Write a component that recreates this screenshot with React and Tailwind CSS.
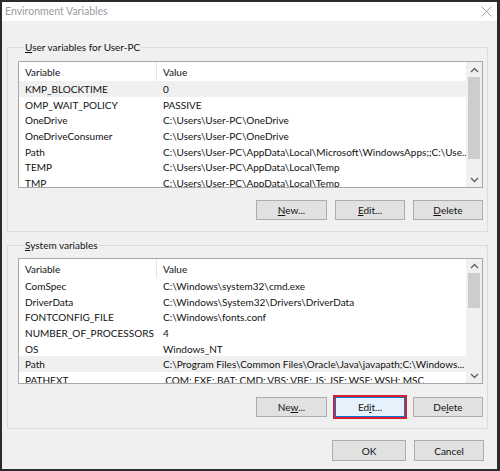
import React from "react";

const userVars = [
  ["KMP_BLOCKTIME", "0"],
  ["OMP_WAIT_POLICY", "PASSIVE"],
  ["OneDrive", "C:\\Users\\User-PC\\OneDrive"],
  ["OneDriveConsumer", "C:\\Users\\User-PC\\OneDrive"],
  ["Path", "C:\\Users\\User-PC\\AppData\\Local\\Microsoft\\WindowsApps;;C:\\Use..."],
  ["TEMP", "C:\\Users\\User-PC\\AppData\\Local\\Temp"],
  ["TMP", "C:\\Users\\User-PC\\AppData\\Local\\Temp"],
];

const systemVars = [
  ["ComSpec", "C:\\Windows\\system32\\cmd.exe"],
  ["DriverData", "C:\\Windows\\System32\\Drivers\\DriverData"],
  ["FONTCONFIG_FILE", "C:\\Windows\\fonts.conf"],
  ["NUMBER_OF_PROCESSORS", "4"],
  ["OS", "Windows_NT"],
  ["Path", "C:\\Program Files\\Common Files\\Oracle\\Java\\javapath;C:\\Windows..."],
  ["PATHEXT", ".COM;.EXE;.BAT;.CMD;.VBS;.VBE;.JS;.JSE;.WSF;.WSH;.MSC"],
];

function Chevron({ up }) {
  return (
    <svg width="9" height="6" viewBox="0 0 9 6" className="block">
      <path
        d={up ? "M1 5 L4.5 1.5 L8 5" : "M1 1 L4.5 4.5 L8 1"}
        fill="none"
        stroke="#606060"
        strokeWidth="1.4"
      />
    </svg>
  );
}

function Row({ name, value, selected }) {
  return (
    <div
      className={
        selected
          ? "flex h-[15.6px] items-center bg-[#f0f0f0] pt-[2px] whitespace-nowrap"
          : "flex h-[15.6px] items-center pt-[2px] whitespace-nowrap"
      }
    >
      <div className="w-[138px] shrink-0 pl-[6px]">{name}</div>
      <div className="pl-[6px]">{value}</div>
    </div>
  );
}

function VarList({ rows, selectedIndex, thumbTop, thumbHeight, height }) {
  return (
    <div className="flex border border-[#a8a8a8] bg-white" style={{ height }}>
      <div className="flex-1 overflow-hidden">
        <div className="flex h-[19px] items-stretch">
          <div className="flex w-[138px] shrink-0 items-center border-r border-[#e5e5e5] pt-[2px] pl-[6px]">
            Variable
          </div>
          <div className="flex items-center pt-[2px] pl-[6px]">Value</div>
        </div>
        {rows.map(([n, v], i) => (
          <Row key={n + i} name={n} value={v} selected={i === selectedIndex} />
        ))}
      </div>
      <div className="flex w-[16px] flex-col bg-[#f0f0f0]">
        <div className="flex shrink-0 items-center justify-center" style={{ height: thumbTop }}>
          <Chevron up />
        </div>
        <div className="mx-[2px] shrink-0 bg-[#cdcdcd]" style={{ height: thumbHeight }} />
        <div className="flex-1" />
        <div className="flex h-[15px] shrink-0 items-center justify-center">
          <Chevron />
        </div>
      </div>
    </div>
  );
}

function Btn({ children, focused, className = "" }) {
  return (
    <button
      className={
        (focused
          ? "border-[#0078d7] bg-[#e5f1fb] outline-2 outline-[#d8202c] "
          : "border-[#adadad] bg-[#e1e1e1] ") +
        "flex h-[20px] items-center justify-center border pt-[1px] text-[#111] " +
        className
      }
    >
      {children}
    </button>
  );
}

function Group({ label, children, className = "" }) {
  return (
    <div className={"border border-[#dcdcdc] px-[10px] pr-[4px] " + className}>
      <div className="-mt-[9px] ml-[6px] w-fit bg-[#f0f0f0] px-[1px] leading-[16px]">{label}</div>
      {children}
    </div>
  );
}

export default function App() {
  return (
    <div className="flex h-[471px] w-[500px] flex-col border-2 border-r-[3px] border-[#2b2b2b] bg-[#f0f0f0] font-['Lato',sans-serif] text-[10px] text-[#111]">
      <div className="flex h-[19px] shrink-0 items-center justify-between bg-white pl-[3px] pr-[5px]">
        <span className="text-[10.5px] text-[#9b9b9b]">Environment Variables</span>
        <svg width="11" height="11" viewBox="0 0 11 11">
          <path d="M0.5 0.5 L10.5 10.5 M10.5 0.5 L0.5 10.5" stroke="#a0a0a0" strokeWidth="1" />
        </svg>
      </div>

      <div className="flex flex-1 flex-col pl-[5px] pr-[9px]">
        <Group label={<><u>U</u>ser variables for User-PC</>} className="mt-[26px] pb-[11px]">
          <div className="mt-[6px]">
            <VarList rows={userVars} selectedIndex={0} thumbTop={15} thumbHeight={82} height={127} />
          </div>
          <div className="mt-[12px] flex justify-end gap-[8px]">
            <Btn className="w-[71px]"><span><u>N</u>ew...</span></Btn>
            <Btn className="w-[70px]"><span><u>E</u>dit...</span></Btn>
            <Btn className="w-[70px]"><span><u>D</u>elete</span></Btn>
          </div>
        </Group>

        <Group label={<><u>S</u>ystem variables</>} className="mt-[13px] pb-[11px]">
          <div className="mt-[5px]">
            <VarList rows={systemVars} selectedIndex={5} thumbTop={14} thumbHeight={35} height={126} />
          </div>
          <div className="mt-[13px] flex justify-end gap-[8px]">
            <Btn className="w-[71px]"><span>Ne<u>w</u>...</span></Btn>
            <Btn focused className="w-[70px]"><span>Ed<u>i</u>t...</span></Btn>
            <Btn className="w-[70px]"><span>De<u>l</u>ete</span></Btn>
          </div>
        </Group>

        <div className="mt-[11px] flex justify-end gap-[8px] pr-[4px]">
          <Btn className="h-[21px] w-[74px]">OK</Btn>
          <Btn className="h-[21px] w-[70px]">Cancel</Btn>
        </div>
      </div>
    </div>
  );
}
